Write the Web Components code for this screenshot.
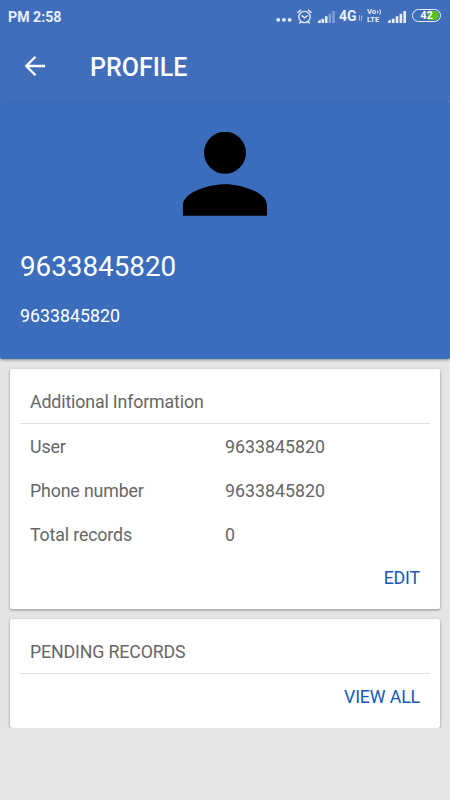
<!DOCTYPE html>
<html lang="en">
<head>
<meta charset="utf-8">
<title>Profile</title>
<style>
	body {
		margin: 0;
		height: 800px;
		overflow: hidden;
		background: #e5e5e5;
		color: #666;
		font: 17.8px/24px Roboto, sans-serif;
	}
</style>
</head>
<body>
<status-bar time="PM 2:58" battery="42"></status-bar>
<app-bar>PROFILE</app-bar>
<profile-header>
	<span slot="name">9633845820</span>
	<span slot="phone">9633845820</span>
</profile-header>
<main>
	<info-card action="EDIT">
		<span slot="title">Additional Information</span>
		<info-row label="User">9633845820</info-row>
		<info-row label="Phone number">9633845820</info-row>
		<info-row label="Total records">0</info-row>
	</info-card>
	<info-card action="VIEW ALL" class="last">
		<span slot="title">PENDING RECORDS</span>
	</info-card>
</main>

<script>
class StatusBar extends HTMLElement {
	constructor() {
		super();
		this.attachShadow({ mode: "open" });
		this.shadowRoot.innerHTML = `
    <style>
    :host {
      display: flex;
      align-items: center;
      justify-content: space-between;
      box-sizing: border-box;
      height: 32px;
      padding: 0 8px;
      background: #406ebb;
      color: #e9effa;
      font-weight: 700;
      font-size: 14.2px;
      line-height: 16px;
    }
    svg {
      display: block;
      fill: currentColor;
    }
    #time { margin-top: 2px; }
    .icons {
      display: flex;
      align-items: center;
    }
    .dots { margin-right: 5px; }
    .alarm { margin-right: 6px; }
    .net { font-size: 14px; margin-left: 3px; width: 18px; }
    .arrows { margin: 3px 4px 0 1px; }
    .volte {
      display: grid;
      width: 16px;
      margin-right: 5px;
      font-size: 7.6px;
      line-height: 8px;
    }
    .volte div { display: flex; align-items: center; }
    .battery {
      box-sizing: border-box;
      width: 29px;
      height: 13px;
      margin: 0 1px 1px 5px;
      border: 1.5px solid #e9effa;
      border-radius: 7px;
      padding: 1px;
    }
    .level {
      height: 100%;
      border-radius: 5px;
      background: linear-gradient(90deg, transparent 58%, #53c21c 58%);
      font-size: 11px;
      line-height: 10px;
      text-align: center;
      color: #fff;
    }
    </style>
    <span id="time"></span>
    <div class="icons">
      <svg class="dots" width="16" height="14"><circle cx="2.2" cy="10.8" r="1.9"/><circle cx="7.9" cy="10.8" r="1.9"/><circle cx="13.6" cy="10.8" r="1.9"/></svg>
      <svg class="alarm" width="15" height="15" viewBox="0 0 15 15" style="fill:none" stroke="currentColor" stroke-width="1.3" stroke-linecap="round"><circle cx="7.5" cy="8" r="5.7"/><path d="M.9 3.6 3.8 1.1M14.1 3.6 11.2 1.1M5 6.7l2.5 2.1L10.3 6.7M3.7 12.8l-1 1.2M11.3 12.8l1 1.2"/></svg>
      <svg width="18" height="13"><path d="M0 13v-2l2.8-1.4V13zM3.6 13V8.8h2.5V13zM7 13V6.2h2.5V13z"/><path opacity=".4" d="M10.6 3.7h2.5V13h-2.5zM14.2 1h2.5v12h-2.5z"/></svg>
      <span class="net">4G</span>
      <svg class="arrows" width="5" height="6" opacity=".55"><path d="M1 0h1v6L0 4h1zM3 6h1V2h1L3 0z"/></svg>
      <div class="volte">
        <div>Vo<svg width="6" height="6" style="fill:none" stroke="currentColor"><path d="M1.5 1.5q1 1.5 0 3M3.8.4q1.6 2.6 0 5.2"/></svg></div>
        <div>LTE</div>
      </div>
      <svg width="19" height="13"><path d="M0 13v-2l2.8-1.4V13zM3.9 13V8.8h2.6V13zM7.7 13V6.2h2.6V13zM11.6 13V3.7h2.6V13zM15.4 13V1H18v12z"/></svg>
      <div class="battery"><div class="level" id="battery"></div></div>
    </div>
    `;
		this.shadowRoot.querySelector("#time").textContent = this.getAttribute("time");
		this.shadowRoot.querySelector("#battery").textContent = this.getAttribute("battery");
	}
}
customElements.define("status-bar", StatusBar);

class AppBar extends HTMLElement {
	constructor() {
		super();
		this.attachShadow({ mode: "open" });
		this.shadowRoot.innerHTML = `
    <style>
    :host {
      display: flex;
      align-items: center;
      gap: 43px;
      box-sizing: border-box;
      height: 69px;
      padding: 0 23px;
      background: #406ebb;
      color: #fff;
    }
    svg { display: block; margin-bottom: 1px; }
    h1 {
      margin: 3px 0 0;
      font-size: 25px;
      font-weight: 500;
      line-height: 30px;
    }
    </style>
    <svg width="24" height="24" fill="none" stroke="#fff" stroke-width="2.3"><path d="M22 12H3.5M12.5 2.7 3.2 12l9.3 9.3"/></svg>
    <h1><slot></slot></h1>
    `;
	}
}
customElements.define("app-bar", AppBar);

class ProfileHeader extends HTMLElement {
	constructor() {
		super();
		this.attachShadow({ mode: "open" });
		this.shadowRoot.innerHTML = `
    <style>
    :host {
      display: block;
      background: linear-gradient(#7c98c8 20px, transparent 20px);
    }
    section {
      display: flex;
      flex-direction: column;
      box-sizing: border-box;
      height: 258px;
      padding: 31px 20px 0;
      border-radius: 2px;
      background: #3c6dbd;
      box-shadow: 0 1px 3px rgba(0,0,0, 0.4);
      clip-path: inset(0 0 -5px 0);
      color: #fff;
    }
    svg {
      align-self: center;
      display: block;
    }
    .name {
      margin-top: 33px;
      font-size: 27.8px;
      line-height: 36px;
    }
    .phone { margin-top: 19px; }
    </style>
    <section>
      <svg width="84" height="84" viewBox="4 4.05 16 16"><path d="M12 12a4 4 0 1 0 0-8 4 4 0 0 0 0 8zM12 14c-2.67 0-8 1.34-8 4v2h16v-2c0-2.66-5.33-4-8-4z"/></svg>
      <div class="name"><slot name="name"></slot></div>
      <div class="phone"><slot name="phone"></slot></div>
    </section>
    `;
	}
}
customElements.define("profile-header", ProfileHeader);

class InfoCard extends HTMLElement {
	constructor() {
		super();
		this.attachShadow({ mode: "open" });
		this.shadowRoot.innerHTML = `
    <style>
    :host {
      display: block;
      box-sizing: border-box;
      margin: 10px 10px 0;
      padding: 10px;
      border-radius: 2px;
      background: #fff;
      box-shadow: 0 1px 3px rgba(0,0,0, 0.4);
    }
    :host(.last) {
      padding-bottom: 9px;
      clip-path: inset(-4px -4px 0 -4px);
    }
    header {
      padding: 11px 10px 9px;
      border-bottom: 1px solid #e0e0e0;
      margin-bottom: 1px;
      letter-spacing: -0.15px;
    }
    footer {
      display: flex;
      justify-content: flex-end;
      align-items: center;
      height: 42px;
      padding: 0 10px;
      letter-spacing: -0.15px;
    }
    :host(.last) footer { height: 44px; }
    a { color: #1259b8; }
    </style>
    <header><slot name="title"></slot></header>
    <slot></slot>
    <footer><a></a></footer>
    `;
		this.shadowRoot.querySelector("a").textContent = this.getAttribute("action");
	}
}
customElements.define("info-card", InfoCard);

class InfoRow extends HTMLElement {
	constructor() {
		super();
		this.attachShadow({ mode: "open" });
		this.shadowRoot.innerHTML = `
    <style>
    :host {
      display: grid;
      grid-template-columns: 1fr 1fr;
      align-items: center;
      height: 44px;
    }
    #label {
      padding-left: 10px;
      letter-spacing: -0.15px;
    }
    </style>
    <span id="label"></span>
    <span><slot></slot></span>
    `;
		this.shadowRoot.querySelector("#label").textContent = this.getAttribute("label");
	}
}
customElements.define("info-row", InfoRow);
</script>
</body>
</html>
